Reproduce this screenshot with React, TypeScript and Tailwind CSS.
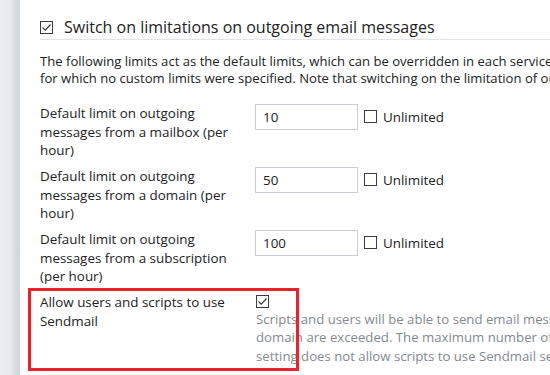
import React from "react";

function Check({ checked }: { checked?: boolean }) {
  return (
    <span className="inline-flex h-[13px] w-[13px] shrink-0 items-center justify-center border border-[#3c3c3c] bg-white">
      {checked && (
        <svg width="11" height="11" viewBox="0 0 11 11" fill="none">
          <path d="M1.5 5.5 L4.3 8.2 L9.5 2.5" stroke="#3c3c3c" strokeWidth="1.2" />
        </svg>
      )}
    </span>
  );
}

function LimitRow({ label, value }: { label: string; value: string }) {
  return (
    <div className="flex h-[63px] items-start">
      <div className="mr-[15px] w-[200px] shrink-0 text-[13.4px] leading-[18.6px] text-[#222]">{label}</div>
      <div className="flex items-center">
        <div className="flex h-[26px] w-[103px] items-center border border-[#c9ced6] px-[7px] text-[13.4px] text-[#222]">
          {value}
        </div>
        <div className="ml-[6px] flex items-center gap-[6px]">
          <Check />
          <span className="text-[13.4px] text-[#222]">Unlimited</span>
        </div>
      </div>
    </div>
  );
}

export default function App() {
  return (
    <div className="flex h-[375px] w-[550px] overflow-hidden bg-white font-['Open_Sans',sans-serif]">
      <div className="w-[20px] shrink-0 bg-gradient-to-r from-[#e9ecf0] via-[#e6e9ed] to-[#cfd2d6]" />
      <div className="min-w-0 flex-1 pl-[20px]">
        <div className="flex items-center gap-[11px] whitespace-nowrap border-b border-[#e1e3e6] pt-[15px]">
          <Check checked />
          <span className="text-[16px] leading-[24px] text-[#222]">
            Switch on limitations on outgoing email messages
          </span>
        </div>
        <div className="mt-[13px] whitespace-nowrap text-[13.1px] leading-[17px] text-[#222]">
          <div>The following limits act as the default limits, which can be overridden in each service plan</div>
          <div>for which no custom limits were specified. Note that switching on the limitation of outgoing email</div>
        </div>
        <div className="mt-[17px]">
          <LimitRow label="Default limit on outgoing messages from a mailbox (per hour)" value="10" />
          <LimitRow label="Default limit on outgoing messages from a domain (per hour)" value="50" />
          <LimitRow label="Default limit on outgoing messages from a subscription (per hour)" value="100" />
          <div className="relative flex items-start">
            <div className="pointer-events-none absolute left-[-12px] top-[-5px] h-[83px] w-[271px] border-[3px] border-[#e8232c]" />
            <div className="mr-[16px] w-[200px] shrink-0 text-[13.4px] leading-[18.6px] text-[#222]">
              Allow users and scripts to use Sendmail
            </div>
            <div className="flex flex-col whitespace-nowrap">
              <div className="flex pb-[2px] pt-[2px]">
                <Check checked />
              </div>
              <div className="text-[13.2px] leading-[18.3px] text-[#848990]">
                <div>Scripts and users will be able to send email messages even if the limits for a mailbox or</div>
                <div>domain are exceeded. The maximum number of messages per hour is still limited. This</div>
                <div>setting does not allow scripts to use Sendmail server.</div>
              </div>
            </div>
          </div>
        </div>
      </div>
    </div>
  );
}
